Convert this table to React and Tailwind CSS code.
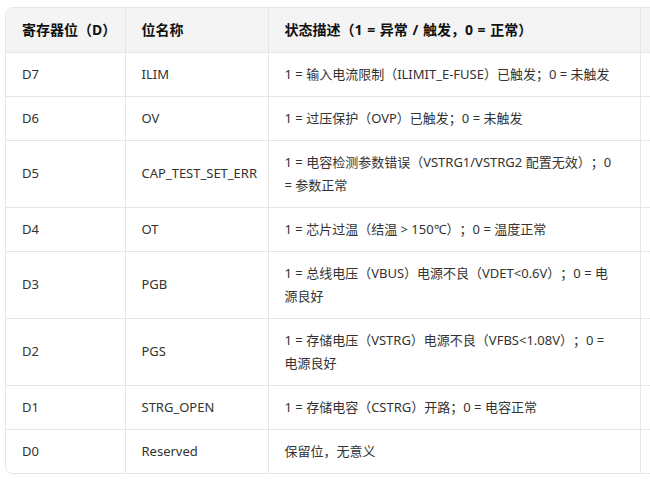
import React from 'react';

const rows = [
  { bit: 'D7', name: 'ILIM', desc: ['1 = 输入电流限制（ILIMIT_E-FUSE）已触发；0 = 未触发'] },
  { bit: 'D6', name: 'OV', desc: ['1 = 过压保护（OVP）已触发；0 = 未触发'] },
  { bit: 'D5', name: 'CAP_TEST_SET_ERR', desc: ['1 = 电容检测参数错误（VSTRG1/VSTRG2 配置无效）；0', '= 参数正常'] },
  { bit: 'D4', name: 'OT', desc: ['1 = 芯片过温（结温 > 150℃）；0 = 温度正常'] },
  { bit: 'D3', name: 'PGB', desc: ['1 = 总线电压（VBUS）电源不良（VDET<0.6V）；0 = 电', '源良好'] },
  { bit: 'D2', name: 'PGS', desc: ['1 = 存储电压（VSTRG）电源不良（VFBS<1.08V）；0 =', '电源良好'] },
  { bit: 'D1', name: 'STRG_OPEN', desc: ['1 = 存储电容（CSTRG）开路；0 = 电容正常'] },
  { bit: 'D0', name: 'Reserved', desc: ['保留位，无意义'] },
];

export default function App() {
  return (
    <div
      className="w-[650px] h-[479px] overflow-hidden bg-white [text-spacing-trim:space-all]"
      style={{ fontFamily: '"Noto Sans", "Noto Sans CJK SC", sans-serif' }}
    >
      <div className="ml-[5px] mt-[7px] w-[760px] rounded-lg border border-[#e6e6e6] overflow-hidden">
        <table className="w-full table-fixed border-collapse text-left">
          <colgroup>
            <col className="w-[119px]" />
            <col className="w-[143px]" />
            <col className="w-[372px]" />
            <col />
          </colgroup>
          <thead>
            <tr className="bg-[#f4f4f4]">
              <th className="h-[44px] px-4 text-[14px] font-bold text-[#111] border-b border-r border-[#e6e6e6] whitespace-nowrap">寄存器位（D）</th>
              <th className="px-4 text-[14px] font-bold text-[#111] border-b border-r border-[#e6e6e6]">位名称</th>
              <th className="px-4 text-[14px] font-bold text-[#111] border-b border-r border-[#e6e6e6] whitespace-nowrap [word-spacing:1px]">状态描述（1 = 异常 / 触发，0 = 正常）</th>
              <th className="border-b border-[#e6e6e6]"></th>
            </tr>
          </thead>
          <tbody>
            {rows.map((r, i) => {
              const last = i === rows.length - 1;
              const b = last ? '' : 'border-b';
              return (
                <tr key={r.bit} className="text-[13px] text-[#333] leading-[23px] align-middle">
                  <td className={`px-4 py-[10px] border-r border-[#e6e6e6] ${b}`}>{r.bit}</td>
                  <td className={`px-4 py-[10px] border-r border-[#e6e6e6] ${b}`}>{r.name}</td>
                  <td className={`px-4 py-[10px] border-r border-[#e6e6e6] whitespace-nowrap ${b}`}>
                    {r.desc.map((line) => (
                      <div key={line}>{line}</div>
                    ))}
                  </td>
                  <td className={`border-[#e6e6e6] ${b}`}></td>
                </tr>
              );
            })}
          </tbody>
        </table>
      </div>
    </div>
  );
}
